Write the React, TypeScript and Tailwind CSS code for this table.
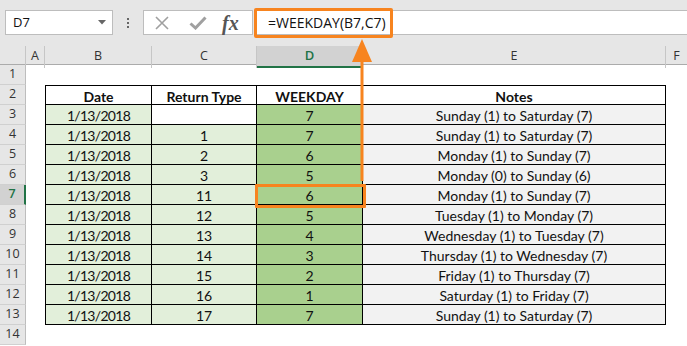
import React from "react";

const rows = [
  { d: "1/13/2018", t: "", w: "7", n: "Sunday (1) to Saturday (7)" },
  { d: "1/13/2018", t: "1", w: "7", n: "Sunday (1) to Saturday (7)" },
  { d: "1/13/2018", t: "2", w: "6", n: "Monday (1) to Sunday (7)" },
  { d: "1/13/2018", t: "3", w: "5", n: "Monday (0) to Sunday (6)" },
  { d: "1/13/2018", t: "11", w: "6", n: "Monday (1) to Sunday (7)" },
  { d: "1/13/2018", t: "12", w: "5", n: "Tuesday (1) to Monday (7)" },
  { d: "1/13/2018", t: "13", w: "4", n: "Wednesday (1) to Tuesday (7)" },
  { d: "1/13/2018", t: "14", w: "3", n: "Thursday (1) to Wednesday (7)" },
  { d: "1/13/2018", t: "15", w: "2", n: "Friday (1) to Thursday (7)" },
  { d: "1/13/2018", t: "16", w: "1", n: "Saturday (1) to Friday (7)" },
  { d: "1/13/2018", t: "17", w: "7", n: "Sunday (1) to Saturday (7)" },
];

const cols = "grid grid-cols-[26px_19px_107px_105px_106px_303px_1fr]";
const uiFont = { fontFamily: '"Open Sans", "Noto Sans", sans-serif' };
const cellFont = { fontFamily: 'Lato, "Liberation Sans", Arial, sans-serif' };

function RowHead({ n, active }: { n: number; active?: boolean }) {
  return (
    <div
      className={
        "h-[20px] flex items-center justify-center text-[12.5px] border-b border-[#d0d0d0] " +
        (active
          ? "bg-[#d2d2d2] text-[#217346] font-semibold border-r-2 border-r-[#217346]"
          : "bg-[#e6e6e6] text-[#333] border-r border-r-[#bdbdbd]")
      }
      style={uiFont}
    >
      {n}
    </div>
  );
}

function Cell({
  children,
  bg,
  left,
  top,
  bold,
  tight,
}: {
  children?: React.ReactNode;
  bg: string;
  left?: boolean;
  top?: boolean;
  bold?: boolean;
  tight?: boolean;
}) {
  return (
    <div
      className={
        "h-[20px] flex items-center justify-center pt-[2px] text-[14px] text-[#111] border-r border-b border-black whitespace-nowrap " +
        bg +
        (left ? " border-l" : "") +
        (top ? " border-t" : "") +
        (bold ? " font-bold" : "") +
        (tight ? " tracking-[-0.7px]" : "")
      }
      style={cellFont}
    >
      {children}
    </div>
  );
}

export default function App() {
  return (
    <div className="relative w-[687px] h-[346px] overflow-hidden bg-white">
      {/* top formula bar */}
      <div className="h-[46px] bg-[#e6e6e6] flex items-start pt-[10px]">
        <div className="ml-[5px] w-[108px] h-[25px] bg-white border border-[#bdbdbd] flex items-center justify-between pl-[7px] pr-[6px]">
          <span className="text-[13px] text-[#111]" style={uiFont}>
            D7
          </span>
          <svg width="8" height="5" viewBox="0 0 8 5">
            <path d="M0 0 L8 0 L4 4.5 Z" fill="#666" />
          </svg>
        </div>
        <div className="w-[30px] h-[25px] flex flex-col items-center justify-center gap-[2px]">
          <div className="w-[2px] h-[2px] bg-[#666]" />
          <div className="w-[2px] h-[2px] bg-[#666]" />
          <div className="w-[2px] h-[2px] bg-[#666]" />
        </div>
        <div className="w-[110px] h-[25px] bg-white border border-[#bdbdbd] flex items-center pl-[11px]">
          <svg width="14" height="14" viewBox="0 0 14 14">
            <path d="M1 1 L13 13 M13 1 L1 13" stroke="#a0a0a0" strokeWidth="1.6" />
          </svg>
          <svg width="18" height="14" viewBox="0 0 18 14" className="ml-[20px]">
            <path d="M1.5 7.5 L6.5 12 L16.5 1.5" stroke="#a0a0a0" strokeWidth="3" fill="none" />
          </svg>
          <span
            className="ml-[15px] text-[20px] italic font-bold text-[#555] leading-none"
            style={{ fontFamily: '"Liberation Serif", "DejaVu Serif", serif' }}
          >
            fx
          </span>
        </div>
        <div className="flex-1 ml-[2px] h-[25px] bg-white border-y border-[#bdbdbd] flex items-center pl-[13px]">
          <span className="text-[14px] text-[#111]" style={uiFont}>
            =WEEKDAY(B7,C7)
          </span>
        </div>
      </div>

      {/* column headers */}
      <div className={cols + " h-[19px] bg-[#e6e6e6] border-b border-[#ababab] text-[12.5px] text-[#333]"} style={uiFont}>
        <div className="border-r border-[#c6c6c6]" />
        <div className="border-r border-[#c6c6c6] flex items-center justify-center">A</div>
        <div className="border-r border-[#c6c6c6] flex items-center justify-center">B</div>
        <div className="border-r border-[#c6c6c6] flex items-center justify-center">C</div>
        <div className="bg-[#d2d2d2] border-r border-[#c6c6c6] border-b-2 border-b-[#217346] flex items-center justify-center text-[#217346] font-semibold text-[13px]">
          D
        </div>
        <div className="border-r border-[#c6c6c6] flex items-center justify-center">E</div>
        <div className="flex items-center justify-center">F</div>
      </div>

      {/* row 1 */}
      <div className={cols}>
        <RowHead n={1} />
      </div>

      {/* row 2 header */}
      <div className={cols}>
        <RowHead n={2} />
        <div />
        <Cell bg="bg-white" left top bold>Date</Cell>
        <Cell bg="bg-white" top bold>Return Type</Cell>
        <Cell bg="bg-white" top bold>WEEKDAY</Cell>
        <Cell bg="bg-white" top bold>Notes</Cell>
        <div />
      </div>

      {rows.map((r, i) => (
        <div className={cols} key={i}>
          <RowHead n={i + 3} active={i + 3 === 7} />
          <div />
          <Cell bg="bg-[#e2efda]" left tight>{r.d}</Cell>
          <Cell bg={r.t === "" ? "bg-white" : "bg-[#e2efda]"}>{r.t}</Cell>
          <Cell bg="bg-[#a9d08e]">{r.w}</Cell>
          <Cell bg="bg-[#f2f2f2]">{r.n}</Cell>
          <div />
        </div>
      ))}

      <div className={cols}>
        <RowHead n={14} />
      </div>

      {/* orange highlight: formula */}
      <div className="absolute left-[254px] top-[8px] w-[139px] h-[30px] border-[3px] border-[#f7841f] rounded-[2px]" />
      {/* orange highlight: D7 */}
      <div className="absolute left-[255px] top-[184px] w-[111px] h-[24px] border-[3px] border-[#f7841f] rounded-[1px]" />
      {/* arrow */}
      <svg className="absolute left-[350px] top-[38px]" width="26" height="146" viewBox="0 0 26 146">
        <path d="M12 1 L22 24 L2 24 Z" fill="#f7841f" />
        <rect x="10.5" y="22" width="3" height="121" fill="#f7841f" />
      </svg>
    </div>
  );
}
